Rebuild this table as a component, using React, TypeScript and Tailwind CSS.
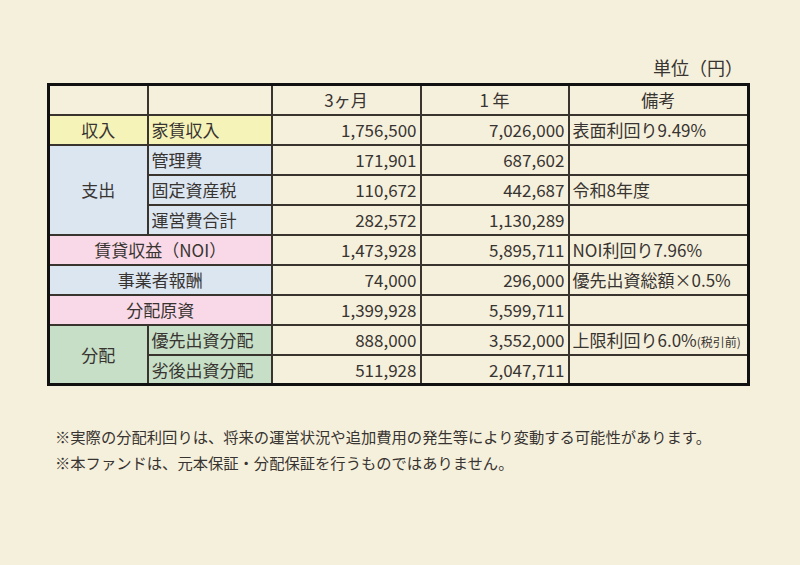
import React from "react";

const font = { fontFamily: '"Noto Sans CJK JP", "Noto Sans", sans-serif' };

const bd = "border-[2px] border-[#3a342e]";

export default function App() {
  return (
    <div className="min-h-[565px] w-[800px] bg-[#F5F0DC] text-[#383431] relative" style={font}>
      <div className="pt-[54px] pl-[47px] w-[747px]">
        <div className="flex justify-end pr-[4px] text-[18px] leading-[26px] h-[29px]">単位（円）</div>
        <table className="table-fixed border-collapse border-[3px] border-[#111] text-[17px] w-[700px]">
          <colgroup>
            <col className="w-[99px]" />
            <col className="w-[124px]" />
            <col className="w-[149px]" />
            <col className="w-[148px]" />
            <col className="w-[180px]" />
          </colgroup>
          <tbody>
            <tr className="h-[30px]">
              <td className={bd}></td>
              <td className={bd}></td>
              <td className={`${bd} text-center`}>3ヶ月</td>
              <td className={`${bd} text-center`}>1 年</td>
              <td className={`${bd} text-center`}>備考</td>
            </tr>
            <tr className="h-[30px]">
              <td className={`${bd} bg-[#F6F3B8] text-center`}>収入</td>
              <td className={`${bd} bg-[#F6F3B8] pl-[3px]`}>家賃収入</td>
              <td className={`${bd} text-right pr-[3px]`}>1,756,500</td>
              <td className={`${bd} text-right pr-[3px]`}>7,026,000</td>
              <td className={`${bd} pl-[3px]`}>表面利回り9.49%</td>
            </tr>
            <tr className="h-[30px]">
              <td rowSpan={3} className={`${bd} bg-[#DCE6F1] text-center`}>支出</td>
              <td className={`${bd} bg-[#DCE6F1] pl-[3px]`}>管理費</td>
              <td className={`${bd} text-right pr-[3px]`}>171,901</td>
              <td className={`${bd} text-right pr-[3px]`}>687,602</td>
              <td className={`${bd} pl-[3px]`}></td>
            </tr>
            <tr className="h-[30px]">
              <td className={`${bd} bg-[#DCE6F1] pl-[3px]`}>固定資産税</td>
              <td className={`${bd} text-right pr-[3px]`}>110,672</td>
              <td className={`${bd} text-right pr-[3px]`}>442,687</td>
              <td className={`${bd} pl-[3px]`}>令和8年度</td>
            </tr>
            <tr className="h-[30px]">
              <td className={`${bd} bg-[#DCE6F1] pl-[3px]`}>運営費合計</td>
              <td className={`${bd} text-right pr-[3px]`}>282,572</td>
              <td className={`${bd} text-right pr-[3px]`}>1,130,289</td>
              <td className={`${bd} pl-[3px]`}></td>
            </tr>
            <tr className="h-[30px]">
              <td colSpan={2} className={`${bd} bg-[#F9D9E7] text-center`}>賃貸収益（NOI）</td>
              <td className={`${bd} text-right pr-[3px]`}>1,473,928</td>
              <td className={`${bd} text-right pr-[3px]`}>5,895,711</td>
              <td className={`${bd} pl-[3px]`}>NOI利回り7.96%</td>
            </tr>
            <tr className="h-[30px]">
              <td colSpan={2} className={`${bd} bg-[#DCE6F1] text-center`}>事業者報酬</td>
              <td className={`${bd} text-right pr-[3px]`}>74,000</td>
              <td className={`${bd} text-right pr-[3px]`}>296,000</td>
              <td className={`${bd} pl-[3px] whitespace-nowrap`}>優先出資総額×0.5%</td>
            </tr>
            <tr className="h-[30px]">
              <td colSpan={2} className={`${bd} bg-[#F9D9E7] text-center`}>分配原資</td>
              <td className={`${bd} text-right pr-[3px]`}>1,399,928</td>
              <td className={`${bd} text-right pr-[3px]`}>5,599,711</td>
              <td className={`${bd} pl-[3px]`}></td>
            </tr>
            <tr className="h-[30px]">
              <td rowSpan={2} className={`${bd} bg-[#C6DFC6] text-center`}>分配</td>
              <td className={`${bd} bg-[#C6DFC6] pl-[3px]`}>優先出資分配</td>
              <td className={`${bd} text-right pr-[3px]`}>888,000</td>
              <td className={`${bd} text-right pr-[3px]`}>3,552,000</td>
              <td className={`${bd} pl-[3px] whitespace-nowrap`}>
                上限利回り6.0%<span className="text-[12px]">(税引前)</span>
              </td>
            </tr>
            <tr className="h-[30px]">
              <td className={`${bd} bg-[#C6DFC6] pl-[3px]`}>劣後出資分配</td>
              <td className={`${bd} text-right pr-[3px]`}>511,928</td>
              <td className={`${bd} text-right pr-[3px]`}>2,047,711</td>
              <td className={`${bd} pl-[3px]`}></td>
            </tr>
          </tbody>
        </table>
      </div>
      <div className="pl-[55px] pt-[37px] text-[15.3px] leading-[26px]">
        <p>※実際の分配利回りは、将来の運営状況や追加費用の発生等により変動する可能性があります。</p>
        <p>※本ファンドは、元本保証・分配保証を行うものではありません。</p>
      </div>
    </div>
  );
}
